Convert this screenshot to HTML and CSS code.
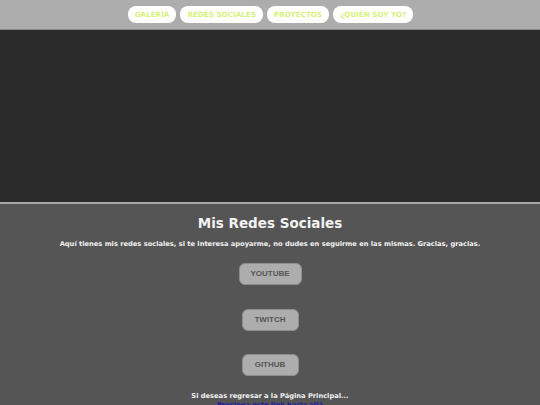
FILE: index.html
```html
<!DOCTYPE html>
<html lang="es">
<head>
<meta charset="utf-8">
<title>Mis Redes Sociales</title>
<link rel="stylesheet" href="styles.css">
</head>
<body>
<header class="top">
  <nav class="nav">
    <a class="nav-btn" href="#">GALERÍA</a>
    <a class="nav-btn" href="#">REDES SOCIALES</a>
    <a class="nav-btn" href="#">PROYECTOS</a>
    <a class="nav-btn" href="#">¿QUIÉN SOY YO?</a>
  </nav>
</header>
<div class="banner"></div>
<main class="content">
  <h1 class="title">Mis Redes Sociales</h1>
  <p class="intro">Aquí tienes mis redes sociales, si te interesa apoyarme, no dudes en seguirme en las mismas. Gracias, gracias.</p>
  <div class="links">
    <a class="social yt" href="#">YOUTUBE</a>
    <a class="social" href="#">TWITCH</a>
    <a class="social" href="#">GITHUB</a>
  </div>
  <p class="back">Si deseas regresar a la Página Principal...<br><a class="back-link" href="#">Presiona este link hacia allá</a></p>
</main>
</body>
</html>
```
FILE: styles.css
```css
html, body {
  margin: 0;
  padding: 0;
  background: #555555;
}
body {
  font-family: "DejaVu Sans", Verdana, sans-serif;
}
.top {
  background: #adadad;
  height: 29px;
  border-bottom: 1px solid #8a8a8a;
  display: flex;
  justify-content: center;
  align-items: flex-start;
}
.nav {
  display: flex;
  gap: 4px;
  padding-top: 6px;
  padding-left: 1px;
}
.nav-btn {
  display: block;
  background: #ffffff;
  color: #d6f27c;
  font-weight: bold;
  font-size: 7.2px;
  line-height: 17px;
  height: 17px;
  padding: 0 7px;
  border-radius: 8px;
  text-decoration: none;
}
.banner {
  background: #2b2b2b;
  height: 172px;
  border-bottom: 2px solid #a9a9a9;
}
.content {
  text-align: center;
  color: #f2f2f2;
  padding-top: 8px;
}
.title {
  margin: 0;
  font-size: 13.5px;
  line-height: 22px;
  font-weight: bold;
}
.intro {
  margin: 5px 0 0;
  font-size: 6.7px;
  font-weight: bold;
  line-height: 10px;
}
.links {
  display: flex;
  flex-direction: column;
  align-items: center;
  gap: 23.5px;
  margin-top: 14px;
}
.social {
  display: block;
  width: 55px;
  height: 20px;
  line-height: 20px;
  background: #adadad;
  border: 1px solid #8f8f8f;
  border-radius: 6px;
  color: #555555;
  font-family: "Liberation Sans", Arial, sans-serif;
  font-weight: bold;
  font-size: 8px;
  text-decoration: none;
}
.social.yt {
  width: 61px;
}
.back {
  margin: 16px 0 0;
  font-size: 6.7px;
  font-weight: bold;
  line-height: 9px;
}
.back-link {
  color: #1a1aa6;
}
```
